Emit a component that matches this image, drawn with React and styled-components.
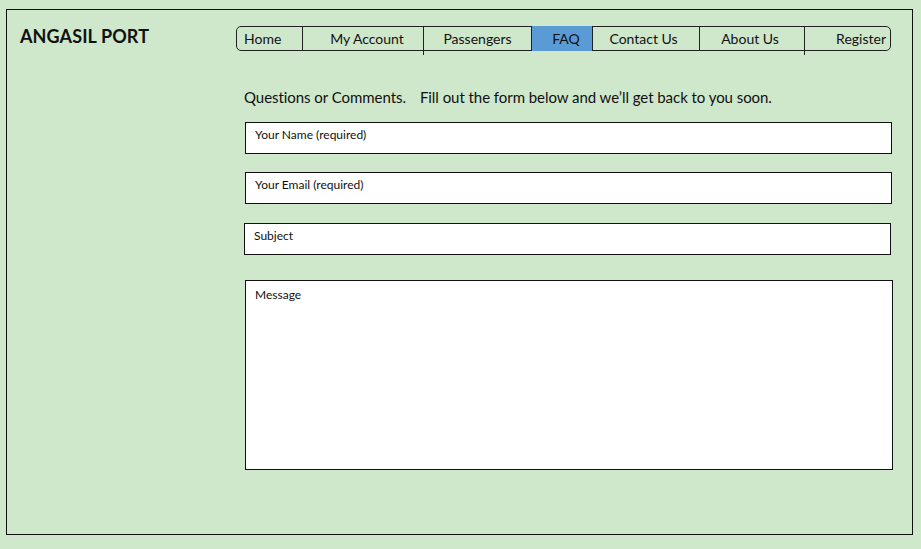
import styled, { createGlobalStyle } from "styled-components";

const GlobalStyle = createGlobalStyle`
  html, body {
    margin: 0;
    padding: 0;
    background: #cfe7cb;
  }
  body {
    font-family: Lato, "Open Sans", sans-serif;
    color: #111;
  }
`;

const Frame = styled.div`
  box-sizing: border-box;
  margin: 9px 0 0 6px;
  width: 907px;
  height: 526px;
  border: 1px solid #111;
  display: grid;
  grid-template-columns: 229px 1fr;
`;

const Side = styled.div`
  padding: 14px 0 0 13px;
`;

const Logo = styled.h1`
  margin: 0;
  font-size: 18px;
  font-weight: 700;
  line-height: 24px;
  letter-spacing: 0.1px;
`;

const Main = styled.div`
  padding-top: 16px;
`;

const Nav = styled.nav`
  box-sizing: border-box;
  width: 655px;
  height: 25px;
  border: 1.5px solid #222;
  border-radius: 5px;
  display: grid;
  grid-template-columns: 65px 121px 108px 61px 107px 105px 1fr;
`;

const NavItem = styled.div`
  position: relative;
  display: flex;
  align-items: center;
  justify-content: ${(p) => p.$align || "center"};
  padding: ${(p) => p.$pad || "0"};
  font-size: 14px;
  border-left: ${(p) => (p.$first ? "none" : "1px solid #222")};
  background: ${(p) => (p.$active ? "#5b9bd5" : "transparent")};
  margin: ${(p) => (p.$active ? "-1px 0" : "0")};

  &::after {
    content: "";
    display: ${(p) => (p.$tail ? "block" : "none")};
    position: absolute;
    left: -1px;
    top: 100%;
    width: 1px;
    height: 5px;
    background: #222;
  }
`;

const Intro = styled.p`
  margin: 36px 0 0 8px;
  font-size: 15px;
  line-height: 20px;
  letter-spacing: -0.05px;

  span {
    margin-left: 14px;
  }
`;

const Form = styled.form`
  margin: 15px 0 0 9px;
  display: flex;
  flex-direction: column;
  width: 647px;
`;

const Field = styled.input`
  box-sizing: border-box;
  width: 647px;
  height: 32px;
  margin: ${(p) => p.$m || "0 0 18px 0"};
  border: 1px solid #111;
  background: #fff;
  padding: 0 9px 8px;
  font-family: Lato, "Open Sans", sans-serif;
  font-size: 12px;
  outline: none;

  &::placeholder {
    color: #111;
  }
`;

const Message = styled.textarea`
  box-sizing: border-box;
  width: 648px;
  height: 190px;
  border: 1px solid #111;
  background: #fff;
  padding: 6px 9px;
  font-family: Lato, "Open Sans", sans-serif;
  font-size: 12px;
  resize: none;
  outline: none;

  &::placeholder {
    color: #111;
  }
`;

const links = [
  { label: "Home", align: "flex-start", pad: "0 0 0 7px", first: true },
  { label: "My Account", pad: "0 0 0 8px" },
  { label: "Passengers", tail: true },
  { label: "FAQ", active: true, pad: "0 0 0 8px" },
  { label: "Contact Us", pad: "0 5px 0 0" },
  { label: "About Us", pad: "0 4px 0 0" },
  { label: "Register", align: "flex-end", pad: "0 4px 0 0", tail: true },
];

export default function App() {
  return (
    <>
      <GlobalStyle />
      <Frame>
        <Side>
          <Logo>ANGASIL PORT</Logo>
        </Side>
        <Main>
          <Nav>
            {links.map((l) => (
              <NavItem
                key={l.label}
                $align={l.align}
                $pad={l.pad}
                $first={l.first}
                $active={l.active}
                $tail={l.tail}
              >
                {l.label}
              </NavItem>
            ))}
          </Nav>
          <Intro>
            Questions or Comments.<span>Fill out the form below and we’ll get back to you soon.</span>
          </Intro>
          <Form>
            <Field placeholder="Your Name (required)" />
            <Field placeholder="Your Email (required)" $m="0 0 19px 0" />
            <Field placeholder="Subject" $m="0 0 25px -1px" />
            <Message placeholder="Message" />
          </Form>
        </Main>
      </Frame>
    </>
  );
}
